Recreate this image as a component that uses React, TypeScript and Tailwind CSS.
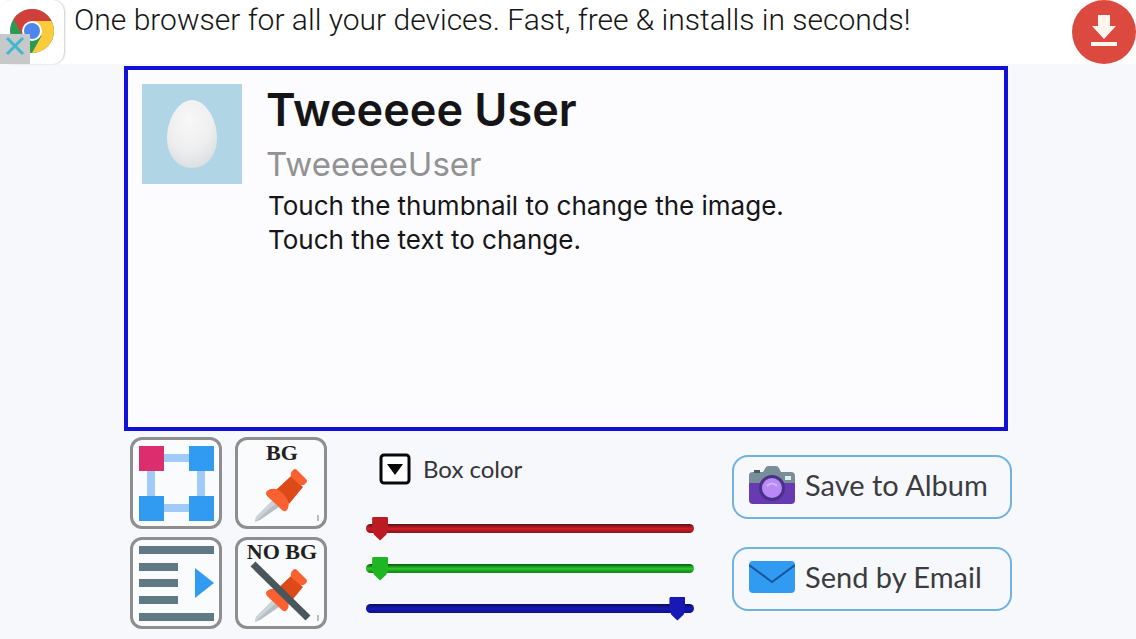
import React, { useState } from 'react';

const ChromeLogo = () => (
  <svg viewBox="0 0 64 64" className="size-16" aria-hidden="true">
    <circle cx="32" cy="31" r="22" fill="#2c9a52" />
    <path d="M32 21 H51.5 A22 22 0 0 1 32 53 L41.5 36 Z" fill="#fccb3c" />
    <path d="M32 31 L22.5 36 L13.5 19 A22 22 0 0 1 51.5 21 H32 Z" fill="#d0403a" />
    <circle cx="32" cy="31" r="10" fill="#ffffff" />
    <circle cx="32" cy="31" r="8" fill="#4c86ee" />
  </svg>
);

const Egg = () => (
  <svg viewBox="0 0 100 100" className="size-[100px]" aria-hidden="true">
    <defs>
      <radialGradient id="egg" cx="0.45" cy="0.3" r="0.75">
        <stop offset="0" stopColor="#f8f8f8" />
        <stop offset="0.6" stopColor="#eeeeef" />
        <stop offset="1" stopColor="#d9dcdf" />
      </radialGradient>
    </defs>
    <rect width="100" height="100" fill="#b0d6e5" />
    <path d="M50 16 C64 16 75 36 75 54 C75 72 64 84 50 84 C36 84 25 72 25 54 C25 36 36 16 50 16 Z" fill="url(#egg)" />
  </svg>
);

const Pin = () => (
  <g>
    <path d="M37 64 L44 70 L25 83 L20 85 L21 80 Z" fill="#b4bec4" />
    <path d="M37 64 L40 67 L20 85 L21 80 Z" fill="#ccd4d8" />
    <path d="M56 39 L68 50 L54 67 L41 53 Z" fill="#dc4a18" />
    <path d="M58 33 Q60 31 62 33 L71 42 Q73 44 71 46 Q68 50 64 47 L57 41 Q54 37 58 33 Z" fill="#fb6030" />
    <path d="M32 54 Q37 50 43 53 Q50 57 53 64 Q55 70 51 74 Q49 75 47 73 L32 59 Q30 56 32 54 Z" fill="#fb6030" />
  </g>
);

type ToolButtonProps = {
  label: string;
  children: React.ReactNode;
};

const ToolButton = ({ label, children }: ToolButtonProps) => (
  <button
    type="button"
    aria-label={label}
    className="size-[92px] overflow-hidden rounded-xl border-[3px] border-[#8e8e8e] bg-[#fafbfd]"
  >
    {children}
  </button>
);

type ColorSliderProps = {
  label: string;
  initial: number;
  className: string;
};

const ColorSlider = ({ label, initial, className }: ColorSliderProps) => {
  const [value, setValue] = useState(initial);

  return (
    <input
      type="range"
      min={0}
      max={255}
      value={value}
      aria-label={label}
      onChange={(e) => setValue(Number(e.target.value))}
      className={
        'block h-10 w-full appearance-none bg-transparent ' +
        '[&::-webkit-slider-runnable-track]:h-[9px] [&::-webkit-slider-runnable-track]:rounded-full ' +
        '[&::-webkit-slider-thumb]:mt-[-7px] [&::-webkit-slider-thumb]:h-6 [&::-webkit-slider-thumb]:w-4 ' +
        '[&::-webkit-slider-thumb]:appearance-none [&::-webkit-slider-thumb]:[clip-path:polygon(8%_0,92%_0,100%_6%,100%_55%,88%_76%,50%_100%,12%_76%,0_55%,0_6%)] ' +
        className
      }
    />
  );
};

export default function App() {
  return (
    <div className="min-h-screen bg-[#f6f8fc] font-['Lato',sans-serif]">
      <header className="flex h-16 bg-white">
        <div className="relative size-16 shrink-0 rounded-xl shadow-[1px_0_2px_#cccccc]">
          <ChromeLogo />
          <button type="button" aria-label="Close ad" className="absolute bottom-0 left-0 flex size-[30px] items-center justify-center bg-[#c6c8c9]">
            <svg viewBox="0 0 30 30" className="size-[30px]" aria-hidden="true">
              <path d="M7 4 L23 20 M23 4 L7 20" stroke="#42b6cd" strokeWidth="3" fill="none" />
            </svg>
          </button>
        </div>
        <p className="flex-1 pt-1 pl-[10px] font-['Roboto',sans-serif] text-[30px] leading-8 font-light whitespace-nowrap text-[#151515]">
          One browser for all your devices. Fast, free &amp; installs in seconds!
        </p>
        <button type="button" aria-label="Install" className="size-16 shrink-0 rounded-full bg-[#dc4a3f]">
          <svg viewBox="0 0 64 64" className="size-16" aria-hidden="true">
            <path d="M26 15 H38 V26 H44 L32 39 L20 26 H26 Z M19 42 H45 V46 H19 Z" fill="#fff5ef" />
          </svg>
        </button>
      </header>

      <main className="pt-[2px]">
        <section className="mr-32 ml-31 flex min-h-[365px] gap-6 border-4 border-[#1010d8] bg-[#fcfbfe] px-[14px] pt-[14px] font-['Inter',sans-serif] text-[#151517]">
          <button type="button" aria-label="Change the image" className="size-[100px] shrink-0">
            <Egg />
          </button>
          <div>
            <h1 className="text-[45px] leading-[52px] font-semibold">Tweeeee User</h1>
            <p className="pt-1 text-[33px] leading-[48px] text-[#929294]">TweeeeeUser</p>
            <p className="pt-px pl-[2px] text-[26px] leading-[34px]">
              Touch the thumbnail to change the image.
              <br />
              Touch the text to change.
            </p>
          </div>
        </section>

        <section className="mr-31 ml-[130px] flex pt-[6px]">
          <div className="grid shrink-0 grid-cols-2 gap-x-[13px] gap-y-2">
            <ToolButton label="Resize box">
              <svg viewBox="3 3 86 86" className="size-full">
                <path d="M21 21 H71 V71 H21 Z" fill="none" stroke="#a0cbf8" strokeWidth="8" />
                <rect x="9" y="9" width="25" height="25" fill="#dc2d6e" />
                <rect x="59" y="9" width="25" height="25" fill="#319bf2" />
                <rect x="9" y="59" width="25" height="25" fill="#319bf2" />
                <rect x="59" y="59" width="25" height="25" fill="#319bf2" />
              </svg>
            </ToolButton>
            <ToolButton label="Background">
              <svg viewBox="3 3 86 86" className="size-full">
                <text x="47" y="23" textAnchor="middle" fontSize="22" fontWeight="700" fontFamily="Liberation Serif, serif" fill="#202020">BG</text>
                <Pin />
                <path d="M83 78 V84" stroke="#bcbcbc" strokeWidth="2" />
              </svg>
            </ToolButton>
            <ToolButton label="Align text">
              <svg viewBox="3 3 86 86" className="size-full">
                <path d="M9 13 H84 M9 30 H48 M9 46 H48 M9 63 H48 M9 80 H84" stroke="#607a85" strokeWidth="8" />
                <path d="M65 31 L84 46 L65 61 Z" fill="#319bf2" />
              </svg>
            </ToolButton>
            <ToolButton label="No background">
              <svg viewBox="3 3 86 86" className="size-full">
                <text x="47" y="22" textAnchor="middle" fontSize="22" fontWeight="700" fontFamily="Liberation Serif, serif" fill="#202020">NO BG</text>
                <Pin />
                <path d="M18 27 L73 81" stroke="#49565b" strokeWidth="7" />
                <path d="M83 78 V84" stroke="#bcbcbc" strokeWidth="2" />
              </svg>
            </ToolButton>
          </div>

          <div className="flex-1 pt-4 pr-[38px] pl-[39px]">
            <button type="button" className="ml-[13px] flex h-8 items-center gap-3 text-[24px] leading-8 text-[#343438]">
              <svg viewBox="0 0 32 32" className="size-8" aria-hidden="true">
                <rect x="2" y="2" width="28" height="28" rx="3" fill="#ffffff" stroke="#080808" strokeWidth="3" />
                <path d="M8 11 H24 L16 22 Z" fill="#080808" />
              </svg>
              Box color
            </button>
            <div className="pt-[23px]">
              <ColorSlider
                label="Red"
                initial={5}
                className="[&::-webkit-slider-runnable-track]:bg-linear-to-b [&::-webkit-slider-runnable-track]:from-[#5a1014] [&::-webkit-slider-runnable-track]:via-[#d01c26] [&::-webkit-slider-runnable-track]:to-[#8c141b] [&::-webkit-slider-thumb]:bg-[#bd1b23]"
              />
              <ColorSlider
                label="Green"
                initial={5}
                className="[&::-webkit-slider-runnable-track]:bg-linear-to-b [&::-webkit-slider-runnable-track]:from-[#0b5a0e] [&::-webkit-slider-runnable-track]:via-[#2ac72a] [&::-webkit-slider-runnable-track]:to-[#138018] [&::-webkit-slider-thumb]:bg-[#1eb622]"
              />
              <ColorSlider
                label="Blue"
                initial={248}
                className="[&::-webkit-slider-runnable-track]:bg-linear-to-b [&::-webkit-slider-runnable-track]:from-[#0c0c58] [&::-webkit-slider-runnable-track]:via-[#1818b8] [&::-webkit-slider-runnable-track]:to-[#101088] [&::-webkit-slider-thumb]:bg-[#1818b4]"
              />
            </div>
          </div>

          <div className="flex w-[280px] shrink-0 flex-col gap-7 pt-[18px]">
            <button type="button" className="flex h-16 items-center gap-[10px] rounded-2xl border-2 border-[#70b2df] px-[15px] pb-1 text-[29px] leading-8 whitespace-nowrap text-[#3c3c40]">
              <svg viewBox="0 0 46 38" className="h-[38px] w-[46px] shrink-0" aria-hidden="true">
                <path d="M0 17 H46 V34 Q46 38 42 38 H4 Q0 38 0 34 Z" fill="#673ab2" />
                <path d="M0 17 V9 Q0 6 4 6 H5 V4 H11 V6 H14 L17 1 Q18 0 20 0 H27 Q29 0 30 2 L32 6 H42 Q46 6 46 10 V17 Z" fill="#788f99" />
                <path d="M5 4 H11 V7 H5 Z" fill="#485b64" />
                <rect x="36" y="10" width="6" height="4" fill="#d8f2e8" />
                <circle cx="23" cy="22" r="13" fill="#49318a" />
                <circle cx="23" cy="22" r="10" fill="#b88af8" />
                <path d="M18 20 Q23 15 28 20" fill="none" stroke="#d3b5fc" strokeWidth="2" />
              </svg>
              Save to Album
            </button>
            <button type="button" className="flex h-16 items-center gap-[10px] rounded-2xl border-2 border-[#70b2df] px-[15px] pb-1 text-[29px] leading-8 whitespace-nowrap text-[#3c3c40]">
              <svg viewBox="0 0 46 34" className="h-[34px] w-[46px] shrink-0" aria-hidden="true">
                <rect y="1" width="46" height="32" rx="4" fill="#319bf2" />
                <path d="M0 5 L23 22 L46 5" fill="none" stroke="#15569d" strokeWidth="2" />
              </svg>
              Send by Email
            </button>
          </div>
        </section>
      </main>
    </div>
  );
}
